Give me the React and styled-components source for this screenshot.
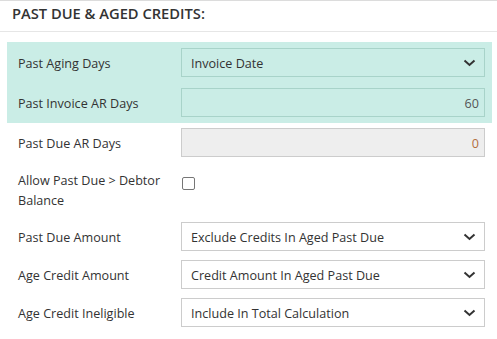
import styled, { createGlobalStyle, css } from 'styled-components';

const GlobalStyle = createGlobalStyle`
  html, body {
    margin: 0;
    padding: 0;
    background: #fff;
  }
  body {
    font-family: "Open Sans", "Liberation Sans", sans-serif;
    color: #333;
  }
`;

const Panel = styled.section`
  width: 497px;
  border-top: 1px solid #dcdcdc;
  padding-bottom: 12px;
`;

const Header = styled.header`
  border-bottom: 1px solid #e6e6e6;
  padding: 2px 0 0 12px;
  box-sizing: border-box;
  height: 31px;
`;

const Title = styled.h2`
  margin: 0;
  font-size: 14.7px;
  line-height: 20px;
  font-weight: 600;
  color: #333;
`;

const Body = styled.div`
  display: flex;
  flex-direction: column;
  padding: 0 5px 0 7px;
`;

const Highlight = styled.div`
  margin-top: 10px;
  background: #caede6;
  padding: 6px 0;
  display: flex;
  flex-direction: column;
  gap: 11px;
`;

const Row = styled.div(
  ({ $top = 0, $start }) => css`
    display: flex;
    align-items: ${$start ? 'flex-start' : 'center'};
    padding: 0 7px 0 11px;
    margin-top: ${$top}px;
  `
);

const Label = styled.label`
  width: 163px;
  flex: none;
  font-size: 12.6px;
  line-height: 20px;
  color: #333;
  padding: 2px 10px 0 0;
  box-sizing: border-box;
`;

const fieldBase = css`
  flex: 1;
  height: 29px;
  box-sizing: border-box;
  font-family: "Open Sans", "Liberation Sans", sans-serif;
  font-size: 12.6px;
  color: #333;
  display: flex;
  align-items: center;
`;

const SelectBox = styled.div(
  ({ $tint }) => css`
    ${fieldBase};
    justify-content: space-between;
    padding: 0 8px 0 9px;
    border: 1px solid ${$tint ? '#a8d3c9' : '#cccccc'};
    background: ${$tint ? 'transparent' : '#fff'};

    span {
      padding-top: 2px;
    }
  `
);

const NumberBox = styled.div(
  ({ $tint, $disabled }) => css`
    ${fieldBase};
    justify-content: flex-end;
    padding: 2px 5px 0;
    border: 1px solid ${$tint ? '#a8d3c9' : '#cccccc'};
    background: ${$disabled ? '#eeeeee' : 'transparent'};
    color: ${$disabled ? '#b36d3e' : '#555'};
  `
);

const Check = styled.input`
  appearance: none;
  margin: 8px 0 0 1px;
  width: 13px;
  height: 13px;
  border: 1px solid #767676;
  border-radius: 2px;
  background: #fff;
  box-sizing: border-box;
`;

function Chevron() {
  return (
    <svg width="13" height="8" viewBox="0 0 13 8">
      <path d="M1.5 1.5 L6.5 6 L11.5 1.5" fill="none" stroke="#333" strokeWidth="2" />
    </svg>
  );
}

function Select({ value, tint }) {
  return (
    <SelectBox $tint={tint}>
      <span>{value}</span>
      <Chevron />
    </SelectBox>
  );
}

export default function App() {
  return (
    <>
      <GlobalStyle />
      <Panel>
        <Header>
          <Title>PAST DUE &amp; AGED CREDITS:</Title>
        </Header>
        <Body>
          <Highlight>
            <Row>
              <Label>Past Aging Days</Label>
              <Select value="Invoice Date" tint />
            </Row>
            <Row>
              <Label>Past Invoice AR Days</Label>
              <NumberBox $tint>60</NumberBox>
            </Row>
          </Highlight>
          <Row $top={5}>
            <Label>Past Due AR Days</Label>
            <NumberBox $disabled>0</NumberBox>
          </Row>
          <Row $top={12} $start>
            <Label>Allow Past Due &gt; Debtor Balance</Label>
            <Check type="checkbox" />
          </Row>
          <Row $top={11}>
            <Label>Past Due Amount</Label>
            <Select value="Exclude Credits In Aged Past Due" />
          </Row>
          <Row $top={9}>
            <Label>Age Credit Amount</Label>
            <Select value="Credit Amount In Aged Past Due" />
          </Row>
          <Row $top={9}>
            <Label>Age Credit Ineligible</Label>
            <Select value="Include In Total Calculation" />
          </Row>
        </Body>
      </Panel>
    </>
  );
}
